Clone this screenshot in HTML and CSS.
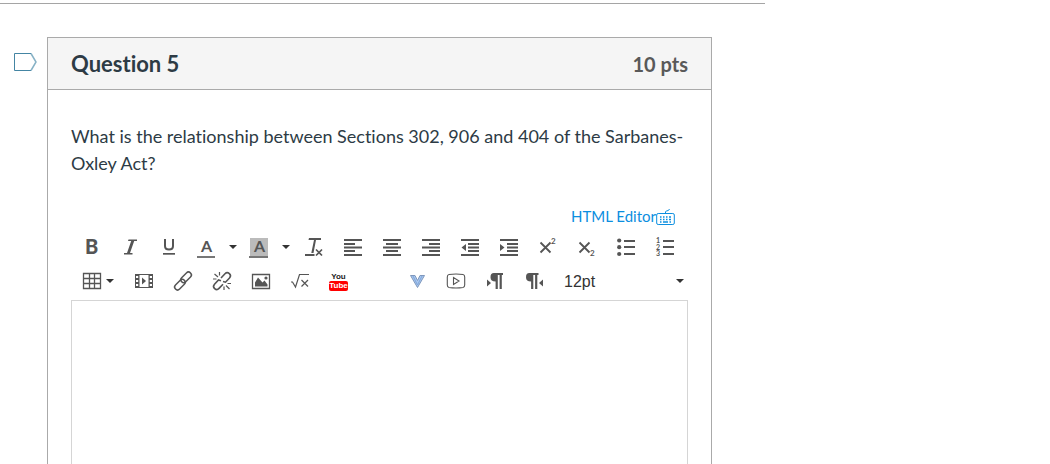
FILE: index.html
```html
<!DOCTYPE html>
<html lang="en">
<head>
  <meta charset="UTF-8">
  <meta name="viewport" content="width=device-width, initial-scale=1.0">
  <title>Quiz: Question 5</title>
  <link rel="stylesheet" href="styles.css">
</head>
<body>
  <main class="quiz">
    <div class="question-row">
      <button class="flag" aria-label="Flag question">
        <svg width="24" height="20" viewBox="0 0 24 20" fill="none" stroke-width="1"><path d="M18 1.500H1.500V18.500H18" stroke="#4485a3"/><path d="M18 1.500L23 10L18 18.500" stroke="#87b2c6" stroke-width="1.500"/></svg>
      </button>
      <section class="question">
        <header class="question-header">
          <h2>Question 5</h2>
          <span class="points">10 pts</span>
        </header>
        <div class="question-body">
          <p class="question-text" id="question-text">What is the relationship between Sections 302, 906 and 404 of the Sarbanes-Oxley Act?</p>
          <div class="editor-links">
            <a href="#">HTML Editor</a>
            <button class="keyboard" aria-label="Keyboard shortcuts">
              <svg width="19" height="18" viewBox="0 0 19 18" fill="none" stroke="#0b8ee0"><rect x=".7" y="6.500" width="17.600" height="11" rx="1.500"/><path d="M9.500 6.500V5Q9.500 4.200 10.500 4Q13 3.800 13.500 2" /><path d="M4 10h1.500m1.500 0h1.500m1.500 0h1.500m1.500 0h2M4 12.500h1.500m1.500 0h1.500m1.500 0h1.500m1.500 0h2M4 15h1.500m1.500 0h5m1.500 0h1.500" stroke-width="1.500"/></svg>
            </button>
          </div>

          <div class="toolbar">
            <div class="tools">
              <button class="tool" aria-label="Bold"><svg class="icon" viewBox="0 0 20 20"><text class="black" x="4" y="17" font-size="20">B</text></svg></button>
              <button class="tool" aria-label="Italic"><svg class="icon" viewBox="0 0 20 20"><path d="M8.500 2.500h8.500v1.500h-2.800l-4.200 12h2.500v1.500H4v-1.500h3l4.200-12H8z"/></svg></button>
              <button class="tool" aria-label="Underline"><svg class="icon" viewBox="0 0 20 20"><path d="M6 2v7q0 3.500 4 3.500t4-3.500V2" fill="none" stroke="#555" stroke-width="2"/><path d="M4 16h12v1.700H4z"/></svg></button>
              <div class="split">
                <button class="tool" aria-label="Text color"><svg class="icon" viewBox="0 0 20 20"><text class="bold" x="5" y="15" font-size="16">A</text><path class="swatch" d="M1 19h18v2H1z"/></svg></button>
                <button class="more" aria-label="Choose text color"><svg class="caret" viewBox="0 0 8 4"><path d="M0 0h8L4 4z"/></svg></button>
              </div>
              <div class="split">
                <button class="tool" aria-label="Background color"><svg class="icon" viewBox="0 0 20 20"><path d="M1 1h18v18H1z" fill="#bbb"/><text class="bold" x="5" y="15" font-size="16">A</text><path class="swatch" d="M0 19h19v2H0z"/></svg></button>
                <button class="more" aria-label="Choose background color"><svg class="caret" viewBox="0 0 8 4"><path d="M0 0h8L4 4z"/></svg></button>
              </div>
              <button class="tool" aria-label="Clear formatting"><svg class="icon" viewBox="0 0 20 20"><path d="M5 1h12v2h-5L9.500 16h-2.200L10 3H4.500zM1 17h9.500v2H1z"/><path d="M12 12.500l6 6m0-6l-6 6" stroke="#555" stroke-width="1.700"/></svg></button>
              <button class="tool" aria-label="Align left"><svg class="icon" viewBox="0 0 20 20"><path d="M1 2h18v2H1zM1 6h11v2H1zM1 9.500h18v2H1zM1 13h11v2H1zM1 17h18v2H1z"/></svg></button>
              <button class="tool" aria-label="Align center"><svg class="icon" viewBox="0 0 20 20"><path d="M1 2h18v2H1zM4 6h12v2H4zM1 9.500h18v2H1zM4 13h12v2H4zM1 17h18v2H1z"/></svg></button>
              <button class="tool" aria-label="Align right"><svg class="icon" viewBox="0 0 20 20"><path d="M1 2h18v2H1zM8 6h11v2H8zM1 9.500h18v2H1zM8 13h11v2H8zM1 17h18v2H1z"/></svg></button>
              <button class="tool" aria-label="Decrease indent"><svg class="icon" viewBox="0 0 20 20"><path d="M1 2h18v2H1zM8 6h11v2H8zM8 9.500h11v2H8zM8 13h11v2H8zM1 17h18v2H1zM6 7v7l-4.500-3.500z"/></svg></button>
              <button class="tool" aria-label="Increase indent"><svg class="icon" viewBox="0 0 20 20"><path d="M1 2h18v2H1zM8 6h11v2H8zM8 9.500h11v2H8zM8 13h11v2H8zM1 17h18v2H1zM1 7v7l4.500-3.500z"/></svg></button>
              <button class="tool" aria-label="Superscript"><svg class="icon" viewBox="0 0 20 20"><path d="M2.500 5.500l10 10m0-10l-10 10" stroke="#555" stroke-width="1.800"/><text class="bold" x="13" y="7" font-size="8">2</text></svg></button>
              <button class="tool" aria-label="Subscript"><svg class="icon" viewBox="0 0 20 20"><path d="M2.500 5.500l10 10m0-10l-10 10" stroke="#555" stroke-width="1.800"/><text class="bold" x="13" y="19" font-size="8">2</text></svg></button>
              <button class="tool" aria-label="Bulleted list"><svg class="icon" viewBox="0 0 20 20"><circle cx="3.200" cy="3.500" r="2.100"/><circle cx="3.200" cy="10.200" r="2.100"/><circle cx="3.200" cy="17" r="2.100"/><path d="M8 3h11v2H8zM8 9h11v2H8zM8 16h11v2H8z"/></svg></button>
              <button class="tool" aria-label="Numbered list"><svg class="icon" viewBox="0 0 20 20"><text class="bold" x="1" y="6" font-size="7">1</text><text class="bold" x="1" y="13" font-size="7">2</text><text class="bold" x="1" y="19" font-size="7">3</text><path d="M8 3h11v2H8zM8 9h11v2H8zM8 16h11v2H8z"/></svg></button>
            </div>
            <div class="tools">
              <button class="tool tool-table" aria-label="Table"><svg class="icon" viewBox="0 0 20 20"><path d="M1.500 2.500h17v15h-17zM7.500 2.500v15m5-15v15M1.500 7.500h17m-17 5h17" fill="none" stroke="#555" stroke-width="1.300"/></svg><svg class="caret" viewBox="0 0 8 4"><path d="M0 0h8L4 4z"/></svg></button>
              <button class="tool" aria-label="Media"><svg class="icon" viewBox="0 0 20 20"><path fill-rule="evenodd" d="M1 3h18v14H1zM5.500 4v12h9V4zM2 5v2h2.200V5zM2 9v2h2.200V9zM2 13v2h2.200v-2zM15.800 5v2H18V5zM15.800 9v2H18V9zM15.800 13v2H18v-2z"/><path d="M8 6.500v7l4-3.500z"/></svg></button>
              <button class="tool" aria-label="Link"><svg class="icon" viewBox="0 0 20 20"><g transform="rotate(-45 10 10)" fill="none" stroke="#555" stroke-width="1.500"><rect x="-1" y="7.500" width="12.500" height="5.800" rx="2.900"/><rect x="8.500" y="6.700" width="12.500" height="5.800" rx="2.900"/></g></svg></button>
              <button class="tool" aria-label="Remove link"><svg class="icon" viewBox="0 0 20 20"><g fill="none" stroke="#555" stroke-width="1.600"><path d="M9 7l4-4.200a2.900 2.900 0 0 1 4.500 4.200l-4 4.200-2.500-.7"/><path d="M11 13.200l-4 4.200a2.900 2.900 0 0 1-4.500-4.200l4-4.200 2.500.7"/><path d="M7.500 1v3.500M2.500 3l3.500 3M1 8h3.500M15.500 12.500h3.500M14 14.500l3.500 3.500M12 15.500v3.500" stroke-width="1.200"/></g></svg></button>
              <button class="tool" aria-label="Image"><svg class="icon" viewBox="0 0 20 20"><path d="M1.500 3.500h17v14h-17z" fill="none" stroke="#555" stroke-width="1.300"/><path d="M4 15.500V11.500l3-5 4.500 5 2-2 3 4v2z"/><circle cx="15" cy="7" r="1.600"/></svg></button>
              <button class="tool" aria-label="Equation"><svg class="icon" viewBox="0 0 20 20"><path d="M1 11h1.500l3 5L9.500 3.500H19M11.500 9l6.500 6.500m0-6.500l-6.500 6.500" fill="none" stroke="#555" stroke-width="1.200"/></svg></button>
              <button class="tool youtube" aria-label="YouTube"><span class="you">You</span><span class="tube">Tube</span></button>
              <span class="tool"></span>
              <button class="tool" aria-label="Embed"><svg class="icon" viewBox="0 0 20 20"><path d="M3.500 4.500h4.500l2.500 5 2.500-5h4.500l-7 12z" fill="#a9c7ee" stroke="#7f98bd"/><path d="M6 5l4.500 9L15 5" fill="none" stroke="#7fa6dc"/></svg></button>
              <button class="tool" aria-label="Video"><svg class="icon" viewBox="0 0 20 20"><path d="M3 3.500Q10 2.500 17 3.500Q18.700 3.800 18.700 6v8q0 2.200-1.700 2.500Q10 17.500 3 16.500Q1.300 16.200 1.300 14V6Q1.300 3.800 3 3.500zM7.500 6.500v7l5.500-3.500z" fill="none" stroke="#555" stroke-width="1.100"/></svg></button>
              <button class="tool" aria-label="Left to right"><svg class="icon" viewBox="0 0 20 20"><path d="M2 8.500v7l4-3.500zM9 2h9v2h-1.200V18h-2.200V4h-1.800V18h-2.200v-7.500Q5.500 10.500 5.500 6.200T9 2z"/></svg></button>
              <button class="tool" aria-label="Right to left"><svg class="icon" viewBox="0 0 20 20"><path d="M19 8.500v7l-4-3.500zM5.500 2h9v2h-1.200V18h-2.200V4H9.300V18H7.100v-7.500Q2 10.500 2 6.200T5.500 2z"/></svg></button>
              <div class="size">
                <select aria-label="Font size">
                  <option>12pt</option>
                  <option>14pt</option>
                  <option>18pt</option>
                </select>
                <svg class="caret" viewBox="0 0 8 4"><path d="M0 0h8L4 4z"/></svg>
              </div>
            </div>
          </div>
          <textarea class="answer" aria-labelledby="question-text"></textarea>
        </div>
      </section>
    </div>
  </main>
</body>
</html>
```
FILE: styles.css
```css
* {
  box-sizing: border-box;
}
body {
  margin: 0;
  background: #fff;
  color: #2d3b45;
  font-family: Lato, "Liberation Sans", sans-serif;
  font-variant-ligatures: none;
}
button {
  padding: 0;
  border: 0;
  background: none;
  font-family: inherit;
}
svg {
  display: block;
  flex: none;
  overflow: visible;
}
.quiz {
  display: flex;
  flex-direction: column;
  height: 100vh;
  margin-right: 285px;
  padding-top: 3px;
  overflow: hidden;
}
.quiz::before {
  content: "";
  border-top: 1px solid #a5a5a5;
}
.question-row {
  display: flex;
  flex: 1;
  align-items: stretch;
  margin-top: 33px;
  padding-right: 53px;
}
.flag {
  align-self: flex-start;
  width: 47px;
  padding: 15px 10px 0 13px;
}
.question {
  display: flex;
  flex: 1;
  flex-direction: column;
  min-width: 0;
  border: 1px solid #aaa;
  border-bottom: 0;
}
.question-header {
  display: flex;
  align-items: center;
  justify-content: space-between;
  height: 52px;
  padding: 0 23px;
  border-bottom: 1px solid #aaa;
  background: #f5f5f5;
}
.question-header h2 {
  margin: 0;
  font-size: 22px;
  line-height: 28px;
}
.points {
  color: #595959;
  font-size: 20px;
  font-weight: bold;
  line-height: 28px;
}
.question-body {
  display: flex;
  flex: 1;
  flex-direction: column;
  padding: 33px 23px 0;
}
.question-text {
  margin: 0;
  font-size: 18px;
  line-height: 27px;
}
.editor-links {
  display: flex;
  align-items: center;
  justify-content: flex-end;
  margin-top: 29px;
  padding-right: 13px;
  font-size: 15px;
  line-height: 20px;
}
.editor-links a {
  color: #0b8ee0;
  text-decoration: none;
}
.toolbar {
  padding: 4px 0 2px;
}
.tools {
  display: flex;
  height: 34px;
}
.tool {
  display: flex;
  align-items: center;
  justify-content: center;
  width: 39px;
}
.icon {
  width: 20px;
  height: 20px;
  fill: #555;
}
.bold {
  font-weight: bold;
}
.black {
  font-weight: 900;
}
.swatch {
  fill: #777;
}
.caret {
  width: 8px;
  height: 4px;
  fill: #333;
}
.split {
  display: flex;
  width: 53px;
}
.split .tool {
  width: 36px;
}
.tool-table {
  gap: 4px;
  width: 53px;
}
.more {
  display: flex;
  align-items: center;
  justify-content: center;
  width: 17px;
}
.youtube {
  flex-direction: column;
  font-family: "Liberation Sans", sans-serif;
  font-size: 8px;
  font-weight: bold;
  line-height: 9px;
}
.you {
  color: #222;
}
.tube {
  border-radius: 2px;
  background: #f00;
  color: #fff;
  line-height: 10px;
}
.size {
  display: flex;
  flex: 1;
  position: relative;
}
.size select {
  width: 100%;
  padding: 0 11px;
  border: 0;
  background: none;
  color: #333;
  font-family: "Liberation Sans", sans-serif;
  font-size: 16px;
  appearance: none;
}
.size .caret {
  position: absolute;
  top: 15px;
  right: 4px;
  pointer-events: none;
}
.answer {
  flex: 1;
  width: 100%;
  min-height: 120px;
  border: 1px solid #d5d5d5;
  border-bottom: 0;
  resize: none;
}
```
